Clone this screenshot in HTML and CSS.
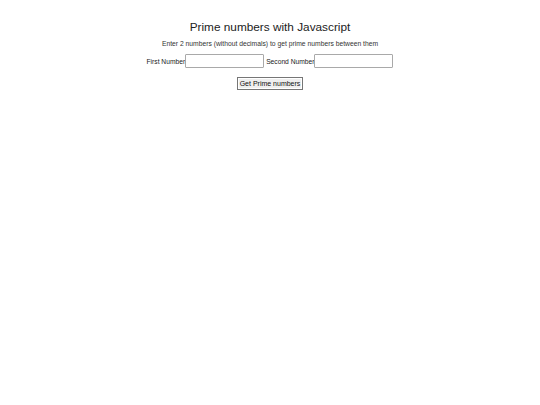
FILE: index.html
```html
<!DOCTYPE html>
<html>
<head>
<meta charset="utf-8">
<link rel="stylesheet" href="styles.css">
</head>
<body>
<div class="wrap">
  <h1 class="title">Prime numbers with Javascript</h1>
  <p class="sub">Enter 2 numbers (without decimals) to get prime numbers between them</p>
  <div class="row">
    <label class="lbl">First Number</label><input class="inp" type="text">
    <label class="lbl second">Second Number</label><input class="inp" type="text">
  </div>
  <div class="btnrow"><button class="btn">Get Prime numbers</button></div>
</div>
</body>
</html>
```
FILE: styles.css
```css
html, body { margin: 0; padding: 0; background: #fff; }
body { font-family: "Liberation Sans", Arial, sans-serif; color: #333; }
.wrap { display: flex; flex-direction: column; align-items: center; padding-top: 20px; }
.title { font-size: 11.8px; font-weight: normal; margin: 0; line-height: 15px; color: #222; }
.sub { font-size: 6.75px; margin: 4px 0 0; line-height: 9px; color: #333; }
.row { display: flex; align-items: center; margin-top: 6px; font-size: 6.7px; }
.lbl { color: #222; }
.second { margin-left: 2px; }
.inp { box-sizing: border-box; width: 79px; height: 14px; padding: 1px 2px; border: 1px solid #a9a9a9; margin: 0; font-size: 7px; border-radius: 1px; }
.btnrow { display: flex; margin-top: 9px; }
.btn { box-sizing: border-box; white-space: nowrap; font-family: "Liberation Sans", Arial, sans-serif; font-size: 7px; line-height: 9px; padding: 1px 2px; height: 13px; background: #efefef; border: 1px solid #767676; box-shadow: inset 0 0 0 1px #fff; color: #111; }
```
